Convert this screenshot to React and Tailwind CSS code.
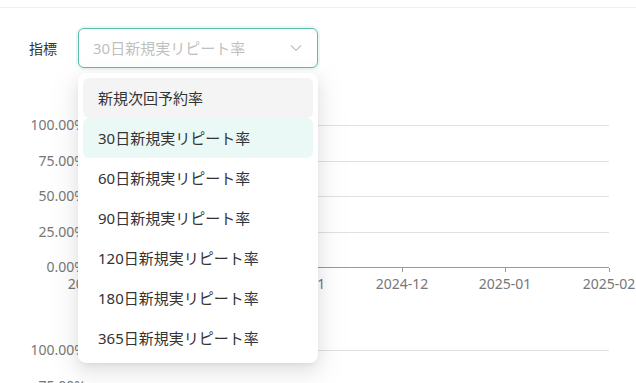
import React from 'react';

const options = [
  '新規次回予約率',
  '30日新規実リピート率',
  '60日新規実リピート率',
  '90日新規実リピート率',
  '120日新規実リピート率',
  '180日新規実リピート率',
  '365日新規実リピート率',
];

const yLabels = [
  { y: 125, t: '100.00%' },
  { y: 161, t: '75.00%' },
  { y: 196, t: '50.00%' },
  { y: 232, t: '25.00%' },
  { y: 267, t: '0.00%' },
];

const xTicks = [
  { x: 94, t: '2024-09' },
  { x: 196, t: '2024-10' },
  { x: 299, t: '2024-11' },
  { x: 402, t: '2024-12' },
  { x: 505, t: '2025-01' },
  { x: 609, t: '2025-02' },
];

const RateChart = () => (
  <svg
    className="block"
    width="636"
    height="315"
    viewBox="0 68 636 315"
    style={{ fontFamily: "'Noto Sans', 'Noto Sans CJK JP', sans-serif" }}
  >
    {/* first chart */}
    {yLabels.map(l => (
      <g key={l.t}>
        {l.y !== 267 && <line x1="94" x2="609" y1={l.y + 0.5} y2={l.y + 0.5} stroke="#e0e0e0" />}
        <text x="86" y={l.y + 5} textAnchor="end" fontSize="14" fill="#777">{l.t}</text>
      </g>
    ))}
    <line x1="94" x2="609" y1="267.5" y2="267.5" stroke="#7f98de" />
    {xTicks.map(t => (
      <g key={t.t}>
        <line x1={t.x + 0.5} x2={t.x + 0.5} y1="268" y2="272" stroke="#999" />
        <text x={t.x} y="289" textAnchor="middle" fontSize="14" fill="#777">{t.t}</text>
      </g>
    ))}

    {/* second chart */}
    <line x1="94" x2="609" y1="350.5" y2="350.5" stroke="#e0e0e0" />
    <text x="86" y="355" textAnchor="end" fontSize="14" fill="#777">100.00%</text>
    <line x1="94" x2="609" y1="386.5" y2="386.5" stroke="#e0e0e0" />
    <text x="86" y="391" textAnchor="end" fontSize="14" fill="#777">75.00%</text>
  </svg>
);

const App = () => {
  return (
    <div className="relative w-[636px] h-[383px] overflow-hidden bg-white font-['Noto_Sans','Noto_Sans_CJK_JP',sans-serif]">
      <div className="h-[8px] border-b border-[#f0f0f0]"></div>

      {/* filter row */}
      <div className="flex items-center pt-[20px] pl-[29px]">
        <span className="text-[14px] text-[#333] w-[49px]">指標</span>
        <div className="relative flex items-center w-[240px] h-[40px] rounded-[6px] border border-[#5cbcab] shadow-[0_0_0_2px_rgba(92,188,171,0.12)] pl-[14px] pr-[14px]">
          <span className="flex-1 text-[15px] text-[#bfbfbf] leading-none">30日新規実リピート率</span>
          <svg width="12" height="8" viewBox="0 0 12 8" className="mr-[1px]">
            <path d="M1 1.5 L6 6.5 L11 1.5" fill="none" stroke="#c0c0c0" strokeWidth="1.1" />
          </svg>
        </div>
      </div>

      <RateChart />

      {/* dropdown overlay */}
      <div className="absolute left-[78px] top-[73px] w-[240px] bg-white rounded-[8px] p-[5px] shadow-[0_6px_16px_0_rgba(0,0,0,0.08),0_3px_6px_-4px_rgba(0,0,0,0.12),0_9px_28px_8px_rgba(0,0,0,0.05)]">
        {options.map((o, i) => (
          <div
            key={o}
            className={`h-[40px] flex items-center px-[15px] rounded-[6px] text-[15px] text-[#333] ${i === 0 ? 'bg-[#f4f4f4]' : ''} ${i === 1 ? 'bg-[#ebf9f6]' : ''}`}
          >
            {o}
          </div>
        ))}
      </div>
    </div>
  );
};

export default App;
